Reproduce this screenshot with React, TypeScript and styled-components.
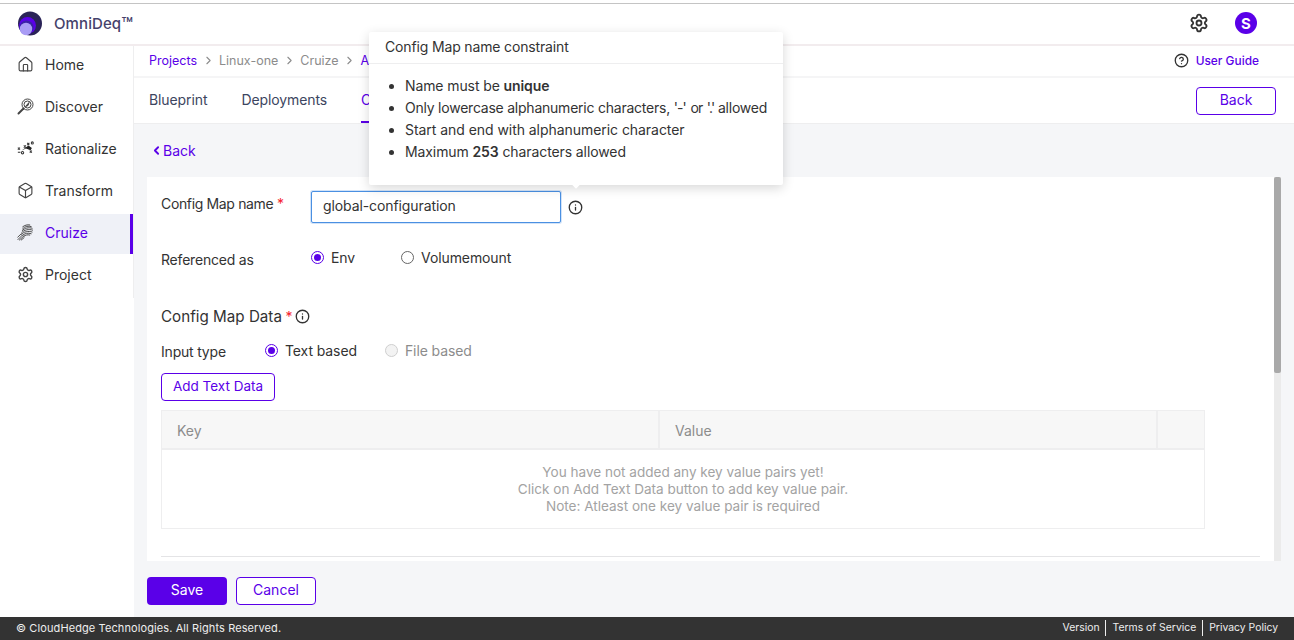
import React from "react";
import styled, { createGlobalStyle } from "styled-components";
import { Settings, CircleHelp, Info, Home as HomeIcon, Box, ChevronLeft, ChevronRight } from "lucide-react";

const Global = createGlobalStyle`
  html, body { margin: 0; padding: 0; height: 100%; overflow: hidden; }
  body { font-family: Inter, "Noto Sans", "Liberation Sans", sans-serif; font-size: 14px; color: #333; background: #fff; }
  #root { height: 640px; }
  * { box-sizing: border-box; }
`;

const PURPLE = "#5a00e8";

const Page = styled.div`
  height: 640px;
  width: 1294px;
  display: flex;
  flex-direction: column;
  position: relative;
`;
const TopRule = styled.div`
  height: 1px;
  margin-top: 3px;
  background: #c4c4c4;
  flex: none;
`;
const Header = styled.header`
  height: 42px;
  flex: none;
  display: flex;
  align-items: center;
  padding: 0 37px 2px 18px;
  border-bottom: 2px solid #f2ecee;
`;
const Brand = styled.div`
  font-size: 15px;
  font-weight: 500;
  color: #45416b;
  margin-left: 12px;
  letter-spacing: 0.1px;
  flex: 1;
`;
const Trademark = styled.span`
  font-size: 19px;
  line-height: 0;
  letter-spacing: 0;
  vertical-align: -2px;
`;
const HeaderIcon = styled.div`
  display: flex;
  color: #333;
  margin-right: 26px;
`;
const Avatar = styled.div`
  width: 22px;
  height: 22px;
  border-radius: 50%;
  background: ${PURPLE};
  color: #fff;
  font-size: 15px;
  font-weight: 700;
  display: flex;
  align-items: center;
  justify-content: center;
`;
const Body = styled.div`
  flex: 1;
  display: flex;
  min-height: 0;
`;
const Sidebar = styled.nav`
  width: 134px;
  flex: none;
  background: #fff;
`;
const NavList = styled.div`
  border-right: 1px solid #eeeeef;
  height: 252px;
`;
const NavItem = styled.div<{ $active?: boolean }>`
  height: ${(p) => (p.$active ? 40 : 42)}px;
  margin-bottom: ${(p) => (p.$active ? 2 : 0)}px;
  padding-bottom: ${(p) => (p.$active ? 4 : 6)}px;
  display: flex;
  align-items: center;
  padding-left: 17px;
  gap: 11px;
  font-size: 14px;
  color: ${(p) => (p.$active ? PURPLE : "#333")};
  background: ${(p) => (p.$active ? "#eff1f7" : "transparent")};
  border-right: ${(p) => (p.$active ? `3px solid ${PURPLE}` : "0")};
`;
const NavIcon = styled.span`
  width: 17px;
  height: 18px;
  display: flex;
  align-items: center;
  justify-content: center;
  color: #444;
  flex: none;
`;
const Main = styled.main`
  flex: 1;
  min-width: 0;
  display: flex;
  flex-direction: column;
  background: #f5f6f8;
`;
const Crumbs = styled.div`
  height: 32px;
  flex: none;
  background: #fff;
  border-bottom: 2px solid #f5f5f6;
  display: flex;
  align-items: center;
  padding: 0 35px 2px 15px;
  font-size: 12.5px;
  color: #8a8a8a;
`;
const CrumbLink = styled.span`
  color: ${PURPLE};
`;
const CrumbText = styled.span`
  color: #8c8c8c;
`;
const CrumbSep = styled.span`
  display: flex;
  margin: 0 4.5px;
  color: #8c8c8c;
`;
const Guide = styled.div`
  margin-left: auto;
  display: flex;
  align-items: center;
  gap: 7px;
  color: ${PURPLE};
  font-weight: 500;
  font-size: 11.9px;
`;
const GuideIcon = styled.span`
  display: flex;
  color: #333;
`;
const Tabs = styled.div`
  height: 46px;
  flex: none;
  background: #fff;
  border-bottom: 1px solid #eeeeef;
  display: flex;
  align-items: stretch;
  padding: 0 18px 0 15px;
  gap: 34px;
`;
const Tab = styled.div<{ $active?: boolean }>`
  display: flex;
  align-items: center;
  font-size: 14px;
  letter-spacing: -0.1px;
  color: ${(p) => (p.$active ? PURPLE : "#3c4560")};
  border-bottom: 2px solid ${(p) => (p.$active ? PURPLE : "transparent")};
  width: ${(p) => (p.$active ? "90px" : "auto")};
`;
const OutlineButton = styled.button<{ $w: number }>`
  width: ${(p) => p.$w}px;
  height: 28px;
  border: 1px solid ${PURPLE};
  border-radius: 4px;
  background: #fff;
  color: ${PURPLE};
  font: inherit;
  font-size: 14px;
  padding: 0 0 4px;
`;
const AddButton = styled(OutlineButton)`
  font-size: 13.5px;
  padding: 0 0 2px;
`;
const TabBack = styled.div`
  margin-left: auto;
  padding-top: 1px;
  display: flex;
  align-items: center;
`;
const Content = styled.div`
  flex: 1;
  min-height: 0;
  display: flex;
  flex-direction: column;
  padding: 0 13px;
`;
const BackLink = styled.div`
  height: 53px;
  flex: none;
  display: flex;
  align-items: center;
  color: ${PURPLE};
  font-size: 14px;
  padding: 0 0 0 3px;
`;
const Card = styled.div`
  height: 384px;
  flex: none;
  background: #fff;
  overflow: hidden;
  position: relative;
`;
const ScrollTrack = styled.div`
  position: absolute;
  top: 0;
  right: 0;
  bottom: 0;
  width: 7px;
  background: #ebebeb;
`;
const ScrollThumb = styled.div`
  height: 196px;
  background: #a9a9a9;
  border-radius: 2px;
`;
const CardBody = styled.div`
  padding: 14px 14px 0;
`;
const FieldRow = styled.div`
  display: flex;
  align-items: center;
  height: 32px;
`;
const Label = styled.div<{ $w: number; $lift?: number }>`
  width: ${(p) => p.$w}px;
  flex: none;
  font-size: 14px;
  letter-spacing: -0.2px;
  color: #333;
  margin-bottom: ${(p) => p.$lift ?? 0}px;
`;
const NameLabel = styled(Label)`
  letter-spacing: -0.35px;
`;
const Star = styled.span`
  color: #f5222d;
`;
const NameInput = styled.input`
  width: 250px;
  height: 32px;
  border: 1px solid #4a90e2;
  border-radius: 2px;
  box-shadow: 0 0 0 1px rgba(74, 144, 226, 0.25);
  padding: 0 11px 3px;
  font: inherit;
  font-size: 14px;
  letter-spacing: -0.1px;
  color: #333;
  outline: none;
`;
const InfoBtn = styled.span`
  display: flex;
  margin-left: 7px;
  color: #333;
`;
const RadioWrap = styled.label<{ $gap: number; $disabled?: boolean }>`
  display: inline-flex;
  align-items: center;
  gap: 7px;
  margin-right: ${(p) => p.$gap}px;
  font-size: 14px;
  letter-spacing: -0.1px;
  color: ${(p) => (p.$disabled ? "#8c8c8c" : "#333")};
  position: relative;
  top: -1px;
`;
const RefRow = styled(FieldRow)`
  margin-top: 20px;
  height: 32px;
  ${RadioWrap} { top: -2px; }
`;
const RadioDot = styled.span<{ $on?: boolean; $disabled?: boolean }>`
  width: 13px;
  height: 13px;
  border-radius: 50%;
  flex: none;
  border: 1px solid ${(p) => (p.$on ? PURPLE : p.$disabled ? "#cfcfcf" : "#666")};
  background: ${(p) => (p.$disabled ? "#f3f3f3" : "#fff")};
  display: flex;
  align-items: center;
  justify-content: center;
  &::after {
    content: "";
    display: ${(p) => (p.$on ? "block" : "none")};
    width: 7px;
    height: 7px;
    border-radius: 50%;
    background: ${PURPLE};
  }
`;
const SectionTitle = styled.div`
  margin-top: 30px;
  display: flex;
  align-items: center;
  font-size: 15.2px;
  color: #333;
  height: 22px;
`;
const SectionStar = styled(Star)`
  margin-left: 3.5px;
  font-size: 14px;
`;
const SectionInfo = styled.span`
  display: flex;
  margin-left: 3px;
  color: #333;
`;
const TypeRow = styled(FieldRow)`
  margin-top: 11px;
  height: 26px;
`;
const AddRow = styled.div`
  margin-top: 9px;
`;
const KvTable = styled.div`
  margin-top: 9px;
  width: 1044px;
  border: 1px solid #eeeeef;
`;
const KvHead = styled.div`
  display: grid;
  grid-template-columns: 498px 498px 1fr;
  height: 39px;
  background: #f7f7f7;
  border-bottom: 2px solid #eeeeef;
`;
const KvCell = styled.div`
  display: flex;
  align-items: center;
  padding: 2px 0 0 15px;
  font-size: 14px;
  color: #8c8c8c;
  border-right: 2px solid #eeeeef;
  &:last-child { border-right: 0; }
`;
const Empty = styled.div`
  height: 78px;
  padding-top: 1px;
  display: flex;
  flex-direction: column;
  align-items: center;
  justify-content: center;
  font-size: 13.55px;
  line-height: 17px;
  color: #a3a3a3;
`;
const Divider = styled.div`
  margin-top: 27px;
  width: 1099px;
  height: 1px;
  background: #e4e4e6;
`;
const CardSpacer = styled.div`
  height: 200px;
`;
const Actions = styled.div`
  display: flex;
  gap: 9px;
  margin-top: 16px;
`;
const SaveButton = styled.button`
  width: 80px;
  height: 28px;
  border: 0;
  border-radius: 4px;
  background: ${PURPLE};
  color: #fff;
  font: inherit;
  font-size: 14px;
  padding: 0 0 4px;
`;
const Footer = styled.footer`
  height: 23px;
  flex: none;
  background: #333;
  color: #eee;
  display: flex;
  align-items: center;
  padding: 0 16px 1px;
  font-size: 11px;
  letter-spacing: 0.1px;
`;
const FooterLinks = styled.div`
  margin-left: auto;
  display: flex;
  align-items: center;
  font-size: 10.4px;
  letter-spacing: 0;
`;
const FooterLink = styled.span`
  padding: 0 5.5px 0 6.5px;
  border-right: 1px solid #eee;
  height: 16px;
  line-height: 16px;
  &:last-child { border-right: 0; padding-right: 0; }
`;
const Popover = styled.div`
  position: absolute;
  left: 369px;
  top: 32px;
  width: 414px;
  height: 153px;
  background: #fff;
  border-radius: 2px;
  box-shadow: 0 3px 12px rgba(0, 0, 0, 0.16);
  color: #333;
  font-size: 14px;
  &::after {
    content: "";
    position: absolute;
    left: 203px;
    bottom: -2px;
    width: 8px;
    height: 8px;
    background: #fff;
    transform: rotate(45deg);
  }
`;
const PopTitle = styled.div`
  height: 32px;
  padding: 0 16px 2px;
  display: flex;
  align-items: center;
  letter-spacing: -0.15px;
  border-bottom: 1px solid #eeeeef;
`;
const PopList = styled.ul`
  margin: 11px 0 0;
  padding: 0 0 0 36px;
  list-style: disc;
  line-height: 22px;
  letter-spacing: -0.05px;
`;
const TightItem = styled.li`
  white-space: nowrap;
  letter-spacing: -0.23px;
`;
const NarrowItem = styled.li`
  letter-spacing: -0.1px;
`;
const Quotes = styled.span`
  letter-spacing: -0.9px;
  word-spacing: 1.5px;
`;
const Strong = styled.b`
  font-weight: 600;
`;

const Logo = () => (
  <svg width="24" height="25" viewBox="0 0 24 25">
    <circle cx="12" cy="12.5" r="12" fill="#2a2357" />
    <circle cx="9.5" cy="14.5" r="8.5" fill="#5a00e8" />
    <circle cx="8.5" cy="16.5" r="7" fill="#3a1fa8" />
    <circle cx="8" cy="18" r="6.2" fill="#a99cf5" />
  </svg>
);
const DiscoverIcon = () => (
  <svg width="17" height="17" viewBox="0 0 17 17" fill="none" stroke="#444" strokeWidth="1">
    <circle cx="10.5" cy="6.5" r="5.5" />
    <circle cx="10.5" cy="6.5" r="3.5" />
    <path d="M8.5 8.5l3.5-4-1 3z" fill="#444" />
    <path d="M6.5 10.5L1.5 15.5" strokeWidth="2" strokeLinecap="round" />
  </svg>
);
const RationalizeIcon = () => (
  <svg width="20" height="16" viewBox="0 0 20 16" fill="none" stroke="#333" strokeWidth="1.2">
    <path d="M1 7.5l2.5 2.5M3.5 7.5L1 10M8 5l2.500 2.500M10.500 5L8 7.500M12 2l2.500 2.500M14.500 2L12 4.500M15 11l2.500 2.500M17.500 11L15 13.500" />
    <circle cx="18" cy="2" r="1.2" />
    <circle cx="6.5" cy="13.5" r="1.4" />
    <path d="M5.500 11l8-6 4 3-1.500 2.500-5.500-2z" fill="#222" stroke="none" />
    <path d="M1 13h3" />
  </svg>
);
const FingerprintIcon = () => (
  <svg width="18" height="18" viewBox="0 0 18 18" fill="none" stroke="#444" strokeWidth="1" strokeLinecap="round">
    <path d="M6 3.500C8 1.800 11 1 13.500 1.500" />
    <path d="M6 5.500C8.500 3 12 2.300 15 3.200" />
    <path d="M5.500 7.500C8 4.800 12.500 3.800 16 5" />
    <path d="M5 9.500C7.500 6.800 12.500 5.500 16.500 7" />
    <path d="M4.500 11.500C7 8.800 12 7.500 16 9" />
    <path d="M6 12.500C8 10.500 11.500 9.500 15 10.800" />
    <path d="M7.500 13.500c1.500-1.200 3.500-2 6-1.300" />
    <path d="M1 17l5-5M2.500 17.500l5-4.500M.8 14.500l3.500-3.500M4.500 17.500l3-2.500" />
  </svg>
);

export default function App() {
  const chev = <ChevronRight size={13} strokeWidth={2} />;
  return (
    <Page>
      <Global />
      <TopRule />
      <Header>
        <Logo />
        <Brand>OmniDeq<Trademark>™</Trademark></Brand>
        <HeaderIcon>
          <Settings size={20} strokeWidth={2.2} />
        </HeaderIcon>
        <Avatar>S</Avatar>
      </Header>
      <Body>
        <Sidebar>
          <NavList>
            <NavItem><NavIcon><HomeIcon size={17} strokeWidth={1.6} /></NavIcon>Home</NavItem>
            <NavItem><NavIcon><DiscoverIcon /></NavIcon>Discover</NavItem>
            <NavItem><NavIcon><RationalizeIcon /></NavIcon>Rationalize</NavItem>
            <NavItem><NavIcon><Box size={17} strokeWidth={1.6} /></NavIcon>Transform</NavItem>
            <NavItem $active><NavIcon><FingerprintIcon /></NavIcon>Cruize</NavItem>
            <NavItem><NavIcon><Settings size={17} strokeWidth={2} /></NavIcon>Project</NavItem>
          </NavList>
        </Sidebar>
        <Main>
          <Crumbs>
            <CrumbLink>Projects</CrumbLink>
            <CrumbSep>{chev}</CrumbSep>
            <CrumbText>Linux-one</CrumbText>
            <CrumbSep>{chev}</CrumbSep>
            <CrumbText>Cruize</CrumbText>
            <CrumbSep>{chev}</CrumbSep>
            <CrumbLink>A</CrumbLink>
            <Guide>
              <GuideIcon><CircleHelp size={15} strokeWidth={2.1} /></GuideIcon>
              User Guide
            </Guide>
          </Crumbs>
          <Tabs>
            <Tab>Blueprint</Tab>
            <Tab>Deployments</Tab>
            <Tab $active>C</Tab>
            <TabBack><OutlineButton $w={80}>Back</OutlineButton></TabBack>
          </Tabs>
          <Content>
            <BackLink><ChevronLeft size={13} strokeWidth={3.4} />Back</BackLink>
            <Card>
              <ScrollTrack><ScrollThumb /></ScrollTrack>
              <CardBody>
                <FieldRow>
                  <NameLabel $w={150} $lift={8}>Config Map name <Star>*</Star></NameLabel>
                  <NameInput readOnly value="global-configuration" />
                  <InfoBtn><Info size={15} strokeWidth={2.1} /></InfoBtn>
                </FieldRow>
                <RefRow>
                  <Label $w={150}>Referenced as</Label>
                  <RadioWrap $gap={46}><RadioDot $on />Env</RadioWrap>
                  <RadioWrap $gap={0}><RadioDot />Volumemount</RadioWrap>
                </RefRow>
                <SectionTitle>
                  Config Map Data<SectionStar>*</SectionStar>
                  <SectionInfo><Info size={15} strokeWidth={2.1} /></SectionInfo>
                </SectionTitle>
                <TypeRow>
                  <Label $w={104}>Input type</Label>
                  <RadioWrap $gap={28}><RadioDot $on />Text based</RadioWrap>
                  <RadioWrap $gap={0} $disabled><RadioDot $disabled />File based</RadioWrap>
                </TypeRow>
                <AddRow><AddButton $w={114}>Add Text Data</AddButton></AddRow>
                <KvTable>
                  <KvHead>
                    <KvCell>Key</KvCell>
                    <KvCell>Value</KvCell>
                    <KvCell />
                  </KvHead>
                  <Empty>
                    <div>You have not added any key value pairs yet!</div>
                    <div>Click on Add Text Data button to add key value pair.</div>
                    <div>Note: Atleast one key value pair is required</div>
                  </Empty>
                </KvTable>
                <Divider />
                <CardSpacer />
              </CardBody>
            </Card>
            <Actions>
              <SaveButton>Save</SaveButton>
              <OutlineButton $w={80}>Cancel</OutlineButton>
            </Actions>
          </Content>
        </Main>
      </Body>
      <Footer>
        © CloudHedge Technologies. All Rights Reserved.
        <FooterLinks>
          <FooterLink>Version</FooterLink>
          <FooterLink>Terms of Service</FooterLink>
          <FooterLink>Privacy Policy</FooterLink>
        </FooterLinks>
      </Footer>
      <Popover>
        <PopTitle>Config Map name constraint</PopTitle>
        <PopList>
          <NarrowItem>Name must be <Strong>unique</Strong></NarrowItem>
          <TightItem>Only lowercase alphanumeric characters, <Quotes>'-' or '.'</Quotes> allowed</TightItem>
          <li>Start and end with alphanumeric character</li>
          <NarrowItem>Maximum <Strong>253</Strong> characters allowed</NarrowItem>
        </PopList>
      </Popover>
    </Page>
  );
}
